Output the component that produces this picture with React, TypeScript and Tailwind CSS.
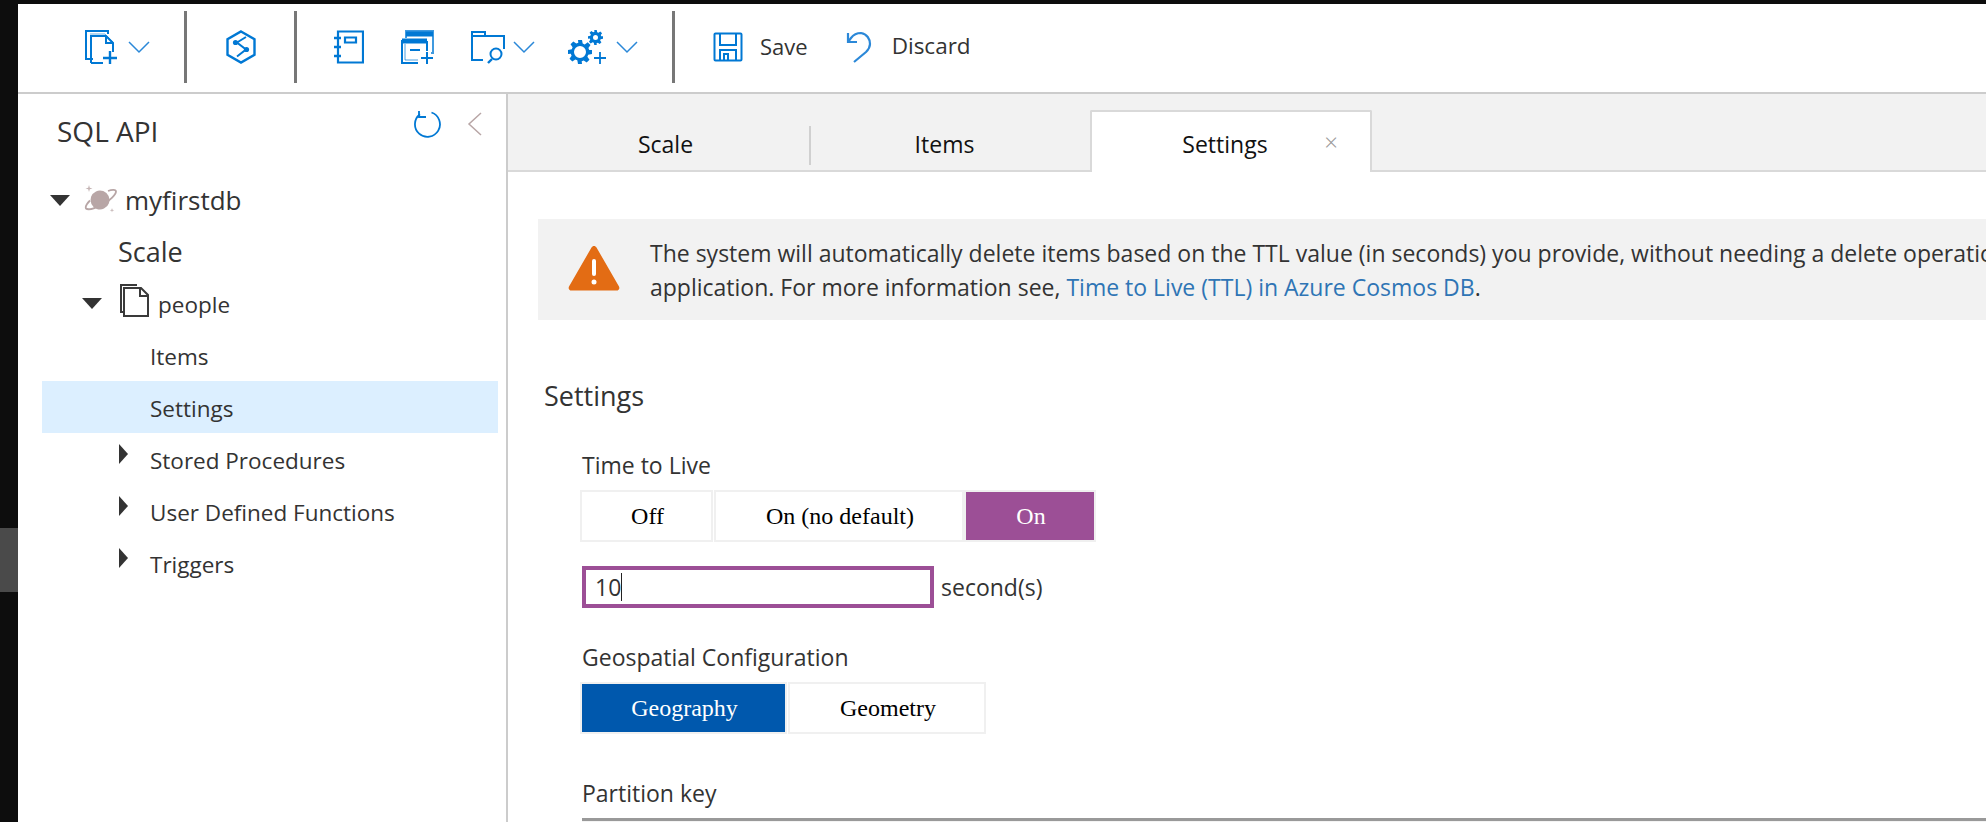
import React from 'react';

const blue = '#0078d4';

const Chevron = () => (
  <svg width="22" height="14" viewBox="0 0 22 14" fill="none" stroke="#2b88d8" strokeWidth="1.5">
    <path d="M1 2l10 10L21 2" />
  </svg>
);

const NewContainerIcon = () => (
  <svg width="34" height="34" viewBox="0 0 34 34" fill="none" stroke={blue} strokeWidth="2">
    <path d="M8 29H1V1h22v3" />
    <path d="M5 4h15l8 8v10" strokeWidth="1" opacity="0.6" />
    <path d="M6 33V6h15l7 7v9" />
    <path d="M21 6v7h7" />
    <path d="M6 33h12" />
    <path d="M25 21v13M18 28h14" strokeWidth="2.4" />
  </svg>
);

const SynapseIcon = () => (
  <svg width="32" height="34" viewBox="0 0 32 34" fill="none" stroke={blue} strokeWidth="2.4">
    <path d="M16 1.500l13.500 7.800v15.400L16 32.500 2.500 24.700V9.300z" />
    <path d="M21 7l-9 5.500 9 7-9 7" strokeWidth="2" />
    <circle cx="10.500" cy="12.500" r="2.600" fill={blue} stroke="none" />
    <circle cx="21.500" cy="19.500" r="2.600" fill={blue} stroke="none" />
  </svg>
);

const NotebookIcon = () => (
  <svg width="30" height="34" viewBox="0 0 30 34" fill="none" stroke={blue} strokeWidth="2.2">
    <path d="M4 1.500h25v31H4z" />
    <path d="M11 7.500h11v5H11z" />
    <path d="M0 8h7M0 17h7M0 26h7" strokeWidth="2.6" />
  </svg>
);

const NewTableIcon = () => (
  <svg width="34" height="34" viewBox="0 0 34 34" fill="none" stroke={blue} strokeWidth="2">
    <path d="M5 8V1h27v22h-2" opacity="0.75" />
    <path d="M5 4h27" strokeWidth="5" />
    <path d="M1 11h25" strokeWidth="5" />
    <path d="M1 10v23h16M26 11v10" />
    <path d="M4 14v16h13" strokeWidth="1" opacity="0.7" />
    <path d="M9 20h10" strokeWidth="2" />
    <path d="M26 22v12M20 28h12" strokeWidth="2" />
  </svg>
);

const FolderSearchIcon = () => (
  <svg width="34" height="34" viewBox="0 0 34 34" fill="none" stroke={blue} strokeWidth="2">
    <path d="M12 30H1V2h13v4h19v13" />
    <path d="M1 6h13" />
    <circle cx="25" cy="24" r="5.500" />
    <path d="M21 29l-4 4" strokeWidth="2.4" />
  </svg>
);

const Gear = ({ size, hole }: { size: number; hole: number }) => (
  <svg width={size} height={size} viewBox="0 0 24 24" fill={blue}>
    <path
      fillRule="evenodd"
      d={`M10 0h4l.7 3.600 2 .8 3-2.100 2.800 2.800-2.100 3 .8 2L24 10v4l-3.800.7-.8 2 2.100 3-2.800 2.800-3-2.100-2 .8L14 24h-4l-.7-3.800-2-.8-3 2.100-2.800-2.800 2.100-3-.8-2L0 14v-4l3.800-.7.8-2-2.100-3 2.800-2.800 3 2.100 2-.8zM12 ${12 - hole}a${hole} ${hole} 0 1 0 0 ${hole * 2}a${hole} ${hole} 0 1 0 0 -${hole * 2}z`}
    />
  </svg>
);

const GearsIcon = () => (
  <div className="relative w-[38px] h-[34px]">
    <div className="absolute left-0 bottom-0">
      <Gear size={24} hole={6} />
    </div>
    <div className="absolute left-[20px] top-0">
      <Gear size={15} hole={4} />
    </div>
    <svg className="absolute right-0 bottom-0" width="12" height="12" viewBox="0 0 12 12" stroke={blue} strokeWidth="1.8">
      <path d="M6 0v12M0 6h12" />
    </svg>
  </div>
);

const SaveIcon = () => (
  <svg width="30" height="30" viewBox="0 0 30 30" fill="none" stroke={blue} strokeWidth="2">
    <path d="M2.500 1.500h25a1 1 0 0 1 1 1v25a1 1 0 0 1-1 1h-25a1 1 0 0 1-1-1v-25a1 1 0 0 1 1-1z" />
    <path d="M7 2v11h16V2" />
    <path d="M7 28V18h16v10" />
    <path d="M11 28v-6h4v6" />
  </svg>
);

const DiscardIcon = () => (
  <svg width="26" height="32" viewBox="0 0 26 32" fill="none" stroke="#2b88d8" strokeWidth="2.2">
    <path d="M2 11L5 7C8 3 12 2 15 2C21 3 24 8 24 13C24 17 22 19 20 21L8 31" />
    <path d="M2 2v9h9" />
  </svg>
);

const RefreshIcon = () => (
  <svg width="28" height="28" viewBox="0 0 28 28" fill="none" stroke={blue} strokeWidth="1.8">
    <path d="M17.500 2.500a12.500 12.500 0 1 1-11.500 1.800" />
    <path d="M5 1v6h7" />
  </svg>
);

const PlanetIcon = () => (
  <svg width="34" height="32" viewBox="0 0 34 32" fill="none">
    <circle cx="16" cy="16" r="9.500" fill="#b8a6a6" transform="rotate(-25 16 16)" />
    <path d="M24 7c4-1.500 8-1.500 8 .5 0 3-6 9-13 13-7 3.500-15 6-17 4-1-2 1-5 4-8" stroke="#b8a6a6" strokeWidth="1.800" />
    <path d="M5 1l.8 2.700 2.700.8-2.700.8L5 8l-.8-2.700-2.700-.8 2.700-.8z" fill="#c4b4b4" />
    <path d="M28 24l.5 1.800 1.800.5-1.800.5-.5 1.800-.5-1.800-1.800-.5 1.800-.5z" fill="#c4b4b4" />
  </svg>
);

const CollectionIcon = () => (
  <svg width="29" height="33" viewBox="0 0 29 33" fill="none" stroke="#3a3a3a" strokeWidth="2">
    <path d="M4 28H1V1h16" />
    <path d="M4 4v28h24V11l-7-7z" />
    <path d="M20 4v8h8" />
  </svg>
);

const WarningIcon = () => (
  <svg width="52" height="46" viewBox="0 0 52 46">
    <path d="M26 1c1 0 2 .6 2.500 1.500l22.500 39c1 2-.2 4-2.500 4h-45c-2.300 0-3.500-2-2.500-4l22.500-39C24 1.600 25 1 26 1z" fill="#e36c14" />
    <rect x="24" y="14" width="4" height="17" rx="2" fill="#fff" />
    <circle cx="26" cy="37" r="2.500" fill="#fff" />
  </svg>
);

const TriangleDown = () => (
  <div className="w-0 h-0 border-l-[10px] border-r-[10px] border-t-[11px] border-l-transparent border-r-transparent border-t-[#333]" />
);

const TriangleRight = () => (
  <div className="w-0 h-0 border-t-[10px] border-b-[10px] border-l-[9px] border-t-transparent border-b-transparent border-l-[#333]" />
);

const Separator = () => <div className="w-[3px] h-[72px] bg-[#777]" />;

const TreeBranch = ({ label }: { label: string }) => (
  <div className="h-[52px] flex items-center pl-[101px]">
    <div className="w-[31px] -mt-[10px]">
      <TriangleRight />
    </div>
    <span className="mt-[3px]">{label}</span>
  </div>
);

const Segment = ({ label, width, active }: { label: string; width: string; active?: string }) => (
  <div className={`${width} ${active ? active + ' text-white' : 'bg-white text-black'} h-[52px] border-2 border-[#f0f0f0] flex items-center justify-center pl-[2px]`}>
    {label}
  </div>
);

export default function App() {
  return (
    <div className="w-[1986px] h-[822px] overflow-hidden flex bg-[#0d0d0d] text-[#333] font-['Open_Sans',sans-serif]">
      <div className="w-[18px] shrink-0 pt-[528px]">
        <div className="h-[64px] bg-[#4a4a4a]" />
      </div>

      <div className="flex-1 flex flex-col mt-[4px] bg-white min-w-0">
        {/* command bar */}
        <div className="h-[90px] shrink-0 flex items-center border-b-2 border-[#ccc] pb-[2px]">
          <div className="ml-[67px] flex items-center gap-[9px]">
            <NewContainerIcon />
            <Chevron />
          </div>
          <div className="ml-[34px]"><Separator /></div>
          <div className="ml-[38px]"><SynapseIcon /></div>
          <div className="ml-[37px]"><Separator /></div>
          <div className="ml-[37px]"><NotebookIcon /></div>
          <div className="ml-[37px]"><NewTableIcon /></div>
          <div className="ml-[36px] flex items-center gap-[8px]">
            <FolderSearchIcon />
            <Chevron />
          </div>
          <div className="ml-[33px] flex items-center gap-[10px]">
            <GearsIcon />
            <Chevron />
          </div>
          <div className="ml-[34px]"><Separator /></div>
          <div className="ml-[38px] flex items-center gap-[17px]">
            <SaveIcon />
            <span className="text-[22px] -mt-[2px]">Save</span>
          </div>
          <div className="ml-[38px] flex items-center gap-[20px]">
            <DiscardIcon />
            <span className="text-[22.5px] -mt-[2px]">Discard</span>
          </div>
        </div>

        <div className="flex-1 flex min-h-0">
          {/* resource tree */}
          <div className="w-[490px] shrink-0 border-r-2 border-[#ccc]">
            <div className="h-[76px] flex items-center pl-[39px] pr-[23px]">
              <span className="text-[28px] flex-1 -mt-[2px]">SQL API</span>
              <div className="-mt-[16px]"><RefreshIcon /></div>
              <svg className="ml-[25px] -mt-[16px]" width="16" height="24" viewBox="0 0 16 24" fill="none" stroke="#b8a6a6" strokeWidth="1.500">
                <path d="M14 1L2 12l12 11" />
              </svg>
            </div>

            <div className="text-[22.5px]">
              <div className="h-[60px] flex items-center pl-[32px]">
                <TriangleDown />
                <div className="ml-[14px] mr-[7px]"><PlanetIcon /></div>
                <span className="text-[26px]">myfirstdb</span>
              </div>
              <div className="h-[52px] flex items-center pl-[100px] -mt-[4px] text-[27px]">Scale</div>
              <div className="h-[52px] flex items-center pl-[64px] -mt-[1px]">
                <TriangleDown />
                <div className="ml-[18px] mr-[9px] -mt-[6px]"><CollectionIcon /></div>
                <span className="mt-[4px]">people</span>
              </div>
              <div className="h-[52px] flex items-center pl-[132px] pt-[3px]">Items</div>
              <div className="h-[52px] flex items-center pl-[108px] ml-[24px] mr-[8px] pt-[3px] bg-[#dcefff]">Settings</div>
              <TreeBranch label="Stored Procedures" />
              <TreeBranch label="User Defined Functions" />
              <TreeBranch label="Triggers" />
            </div>
          </div>

          {/* tabs and settings */}
          <div className="flex-1 min-w-0 overflow-hidden">
            <div className="h-[78px] bg-[#f2f2f2] border-b-2 border-[#d9d9d9] flex items-end text-[23px] text-[#111]">
              <div className="w-[303px] h-[62px] flex items-center justify-center relative pl-[12px] pt-[10px]">
                Scale
                <div className="absolute right-0 top-[18px] bottom-[5px] w-[2px] bg-[#d0d0d0]" />
              </div>
              <div className="w-[279px] h-[62px] flex items-center justify-center pr-[12px] pt-[10px]">Items</div>
              <div className="w-[282px] h-[62px] -mb-[2px] bg-white border-2 border-b-0 border-[#d9d9d9] rounded-t-[2px] flex items-center justify-center relative pr-[12px] pt-[4px]">
                Settings
                <span className="absolute right-[32px] top-[12px] text-[24px] font-light text-[#999]">×</span>
              </div>
            </div>

            <div className="pl-[30px]">
              <div className="h-[101px] mt-[47px] bg-[#f2f2f2] flex text-[23px] leading-[34px]">
                <div className="ml-[30px] mt-[26px]"><WarningIcon /></div>
                <div className="ml-[30px] mt-[17px] whitespace-nowrap">
                  <div>The system will automatically delete items based on the TTL value (in seconds) you provide, without needing a delete operation</div>
                  <div>
                    application. For more information see, <span className="text-[#2f75b5]">Time to Live (TTL) in Azure Cosmos DB</span>.
                  </div>
                </div>
              </div>

              <div className="pl-[6px] mt-[58px] text-[27px] leading-[36px]">Settings</div>

              <div className="pl-[44px] mt-[36px] text-[23px]">
                <div className="leading-[30px]">Time to Live</div>
                <div className="flex mt-[10px] -ml-[2px] text-[24px] font-['Liberation_Serif',serif]">
                  <Segment label="Off" width="w-[133px]" />
                  <Segment label="On (no default)" width="w-[250px] ml-[1px]" />
                  <Segment label="On" width="w-[132px]" active="bg-[#9c4f96]" />
                </div>
                <div className="flex items-center mt-[24px]">
                  <div className="w-[352px] h-[42px] border-4 border-[#9c4f96] pl-[9px] flex items-center">
                    10
                    <div className="w-[1px] h-[28px] bg-[#222]" />
                  </div>
                  <span className="ml-[7px]">second(s)</span>
                </div>
                <div className="leading-[30px] mt-[34px]">Geospatial Configuration</div>
                <div className="flex mt-[10px] -ml-[2px] text-[24px] font-['Liberation_Serif',serif]">
                  <Segment label="Geography" width="w-[207px]" active="bg-[#0058ad]" />
                  <Segment label="Geometry" width="w-[198px] ml-[1px]" />
                </div>
                <div className="leading-[30px] mt-[44px]">Partition key</div>
                <div className="h-[10px] mt-[10px] border-t-[3px] border-[#999] bg-[#f4f4f4]" />
              </div>
            </div>
          </div>
        </div>
      </div>
    </div>
  );
}
